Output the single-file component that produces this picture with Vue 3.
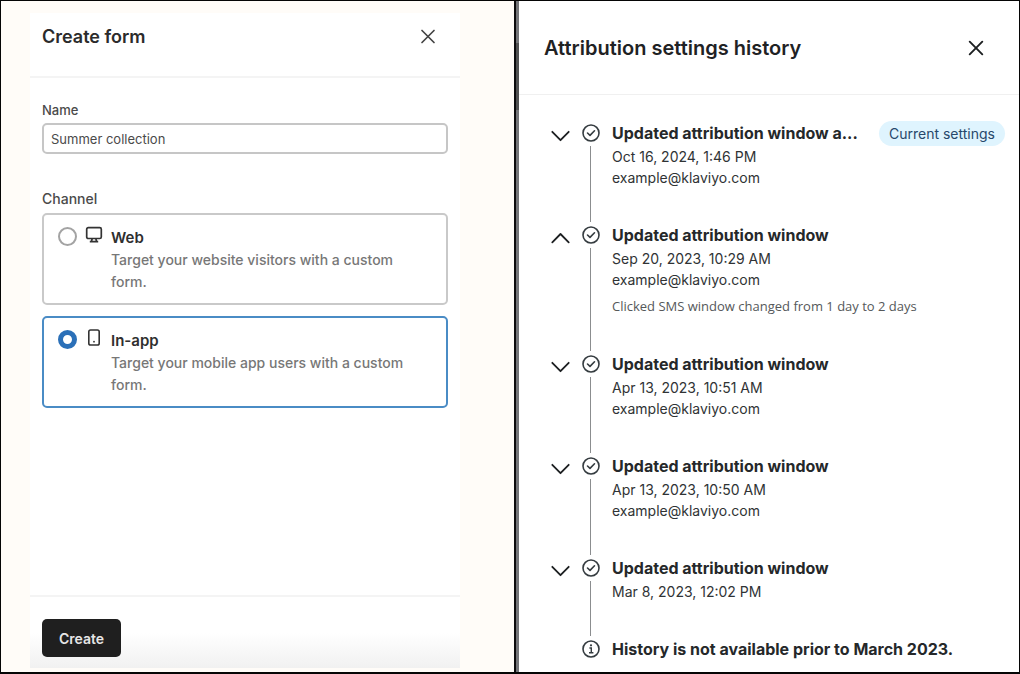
<script setup>
import { ref } from 'vue'

const name = ref('Summer collection')
const channel = ref('app')

const channels = [
  { id: 'web', title: 'Web', text: 'Target your website visitors with a custom form.' },
  { id: 'app', title: 'In-app', text: 'Target your mobile app users with a custom form.' },
]

const entries = ref([
  { title: 'Updated attribution window a...', date: 'Oct 16, 2024, 1:46 PM', by: 'example@klaviyo.com', current: true },
  { title: 'Updated attribution window', date: 'Sep 20, 2023, 10:29 AM', by: 'example@klaviyo.com', detail: 'Clicked SMS window changed from 1 day to 2 days', open: true },
  { title: 'Updated attribution window', date: 'Apr 13, 2023, 10:51 AM', by: 'example@klaviyo.com' },
  { title: 'Updated attribution window', date: 'Apr 13, 2023, 10:50 AM', by: 'example@klaviyo.com' },
  { title: 'Updated attribution window', date: 'Mar 8, 2023, 12:02 PM' },
])
</script>

<template>
  <div class="screen">
    <section class="left">
      <form class="card" @submit.prevent>
        <header class="card-head">
          <h1>Create form</h1>
          <button type="button" class="icon-btn" aria-label="Close form">
            <svg width="16" height="16" viewBox="0 0 16 16"><path d="M2 1.5 14 13.5M14 1.5 2 13.5" stroke="#444" stroke-width="1.7" fill="none" stroke-linecap="round" /></svg>
          </button>
        </header>
        <div class="card-body">
          <label class="name-label" for="name">Name</label>
          <input id="name" v-model="name" class="name-input" type="text" />
          <fieldset>
            <legend>Channel</legend>
            <label v-for="c in channels" :key="c.id" class="option" :class="{ picked: channel === c.id }">
              <input v-model="channel" type="radio" name="channel" :value="c.id" />
              <svg v-if="c.id === 'web'" class="kind" width="18" height="18" viewBox="0 0 18 18" fill="none" stroke="#333">
                <rect x="1.7" y="1.7" width="14.6" height="10.8" rx="1.6" stroke-width="1.7" />
                <path d="M7.2 12.5 6.4 15.4M10.8 12.5 11.6 15.4M4.8 15.6H13.2" stroke-width="1.7" />
              </svg>
              <svg v-else class="kind" width="18" height="18" viewBox="0 0 18 18" fill="none" stroke="#333">
                <rect x="3.8" y="1" width="10.4" height="15" rx="1.8" stroke-width="1.6" />
                <circle cx="9" cy="12.7" r="0.9" fill="#333" stroke="none" />
              </svg>
              <span class="option-text">
                <strong>{{ c.title }}</strong>
                <span>{{ c.text }}</span>
              </span>
            </label>
          </fieldset>
        </div>
        <footer class="card-foot">
          <button type="submit" class="create">Create</button>
        </footer>
      </form>
    </section>

    <div class="divider"></div>
    <div class="scrollbar"><div class="thumb"></div></div>

    <section class="right">
      <header class="history-head">
        <h2>Attribution settings history</h2>
        <button type="button" class="icon-btn" aria-label="Close history">
          <svg width="16" height="16" viewBox="0 0 16 16"><path d="M1.7 1.7 14.3 14.3M14.3 1.7 1.7 14.3" stroke="#1c1f21" stroke-width="1.9" fill="none" stroke-linecap="round" /></svg>
        </button>
      </header>
      <ol class="history">
        <li v-for="(e, i) in entries" :key="i" class="entry">
          <button type="button" class="toggle" :aria-expanded="!!e.open" aria-label="Toggle details" @click="e.open = !e.open">
            <svg width="20" height="12" viewBox="0 0 20 12" fill="none" stroke="#1c1f21" stroke-width="1.8" stroke-linecap="round" stroke-linejoin="round">
              <path v-if="e.open" d="M1.3 10.4 9.5 2 17.7 10.4" />
              <path v-else d="M1.3 1.8 9.5 10.2 17.7 1.8" />
            </svg>
          </button>
          <div class="rail">
            <svg width="18" height="18" viewBox="0 0 18 18" fill="none" stroke="#353c40" stroke-linecap="round" stroke-linejoin="round">
              <circle cx="9" cy="9" r="8" stroke-width="1.6" />
              <path d="M5.5 9 8 11.4 12.5 6.8" stroke-width="1.6" />
            </svg>
            <div class="line"></div>
          </div>
          <div class="info">
            <div class="title-row">
              <h3>{{ e.title }}</h3>
              <span v-if="e.current" class="badge">Current settings</span>
            </div>
            <p>{{ e.date }}</p>
            <p v-if="e.by">{{ e.by }}</p>
            <p v-if="e.open && e.detail" class="detail">{{ e.detail }}</p>
          </div>
        </li>
        <li class="entry end">
          <span class="toggle"></span>
          <div class="rail">
            <svg width="18" height="18" viewBox="0 0 18 18" fill="none" stroke="#353c40">
              <circle cx="9" cy="9" r="8" stroke-width="1.6" />
              <path d="M7.4 8H9.3V12.6M7 12.7H11.4" stroke-width="1.4" />
              <circle cx="9" cy="5.3" r="1.1" fill="#353c40" stroke="none" />
            </svg>
          </div>
          <div class="info"><div class="title-row"><h3>History is not available prior to March 2023.</h3></div></div>
        </li>
      </ol>
    </section>
  </div>
</template>

<style>
body { margin: 0; }
</style>

<style scoped>
* { box-sizing: border-box; }
.screen {
  display: grid;
  grid-template-columns: 513fr 2px 3px 500fr;
  min-height: 100vh;
  border: 1px solid #050505;
  border-bottom-width: 2px;
  background: #fff;
  font-family: Inter, "Liberation Sans", sans-serif;
  color: #1f2224;
}
h1, h2, h3, p { margin: 0; }
button { font-family: inherit; }
.icon-btn {
  display: flex;
  padding: 4px;
  border: 0;
  background: none;
}
.left {
  display: flex;
  padding: 12px 54px 4px 29px;
  background: #fffcf8;
}
.card {
  flex: 1;
  min-width: 0;
  display: flex;
  flex-direction: column;
  background: #fff;
}
.card-head {
  display: flex;
  align-items: center;
  justify-content: space-between;
  height: 65px;
  padding: 0 20px 16px 12px;
  border-bottom: 2px solid #f4f4f4;
}
h1 { font-size: 18px; font-weight: 600; line-height: 24px; color: #2b2b2b; }
.card-body {
  flex: 1;
  padding: 22px 12px;
}
.name-label, legend {
  display: block;
  padding: 0;
  color: #4a4a4a;
  font-weight: 500;
  line-height: 20px;
}
.name-label { font-size: 13px; margin-bottom: 3px; }
legend { font-size: 14px; margin-bottom: 4px; }
.name-input {
  display: block;
  width: 100%;
  height: 31px;
  padding: 0 7px;
  border: 2px solid #c6c6c6;
  border-radius: 5px;
  background: #fff;
  color: #4a4a4a;
  font: 400 13px Inter, "Liberation Sans", sans-serif;
}
fieldset {
  min-width: 0;
  margin: 35px 0 0;
  padding: 0;
  border: 0;
}
.option {
  display: flex;
  align-items: flex-start;
  padding: 11px 30px 10px 14px;
  border: 2px solid #c9c9c9;
  border-radius: 5px;
}
.option + .option { margin-top: 11px; }
.option.picked { border-color: #4a8cc5; }
.option input {
  appearance: none;
  flex: none;
  width: 19px;
  height: 19px;
  margin: 1px 8px 0 0;
  border: 2px solid #a3a3a3;
  border-radius: 50%;
  background: #fff;
}
.option input:checked { border: 5px solid #2b70b8; }
.kind { flex: none; margin-right: 8px; }
.option-text { font-size: 14px; font-weight: 500; line-height: 22px; color: #777; }
.option-text strong { display: block; font-size: 15px; font-weight: 600; line-height: 23px; color: #2f2f2f; }
.option-text span { display: block; }
.card-foot {
  padding: 22px 12px 11px;
  border-top: 2px solid #f4f4f4;
  background: linear-gradient(#fff 50%, #f1f1f1);
}
.create {
  display: block;
  height: 38px;
  padding: 0 17px;
  border: 0;
  border-radius: 5px;
  background: #1f1f1f;
  color: #e6e6e6;
  font-size: 14px;
  font-weight: 600;
}
.divider { background: #0c0c0e; }
.scrollbar { padding-top: 42px; background: #737478; }
.thumb { height: 67px; background: #505152; }
.right { min-width: 0; }
.history-head {
  display: flex;
  align-items: center;
  justify-content: space-between;
  height: 94px;
  padding: 0 31px 0 25px;
  border-bottom: 1px solid #f0f0f0;
}
h2 { font-size: 20px; font-weight: 600; line-height: 28px; }
.history {
  margin: 0;
  padding: 25px 14px 0 32px;
  list-style: none;
}
.entry { display: flex; }
.toggle {
  flex: none;
  display: flex;
  align-self: flex-start;
  width: 20px;
  margin: 10px 10px 0 0;
  padding: 0;
  border: 0;
  background: none;
}
.rail {
  flex: none;
  display: flex;
  flex-direction: column;
  align-items: center;
  width: 19px;
  margin-right: 12px;
  padding-top: 4px;
}
.line {
  flex: 1;
  width: 1px;
  margin-top: 4px;
  background: #8b8d8f;
}
.info {
  flex: 1;
  min-width: 0;
  padding-bottom: 34px;
}
.end .info { padding-bottom: 0; }
.title-row {
  display: flex;
  align-items: center;
  justify-content: space-between;
  height: 26px;
}
h3 {
  font-size: 16px;
  font-weight: 700;
  line-height: 26px;
  white-space: nowrap;
  color: #25282a;
}
.badge {
  flex: none;
  padding: 0 10px;
  border-radius: 13px;
  background: #dff4fe;
  color: #27486b;
  font-size: 14px;
  line-height: 25px;
}
.info p { font-size: 14px; line-height: 21px; color: #303335; }
.info .detail { margin-top: 6px; font-family: "Open Sans", "Noto Sans", sans-serif; font-size: 13px; color: #55585a; }
</style>
